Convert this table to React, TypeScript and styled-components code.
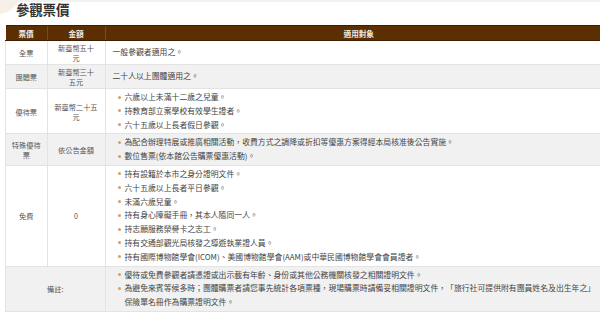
import React from 'react';
import styled, { createGlobalStyle } from 'styled-components';

const GlobalStyle = createGlobalStyle`
  html, body {
    margin: 0;
    padding: 0;
    background: #fff;
    overflow: hidden;
  }
  body {
    font-family: "Noto Sans CJK TC", "Noto Sans", sans-serif;
    color: #444;
  }
`;

const Page = styled.div`
  width: 600px;
  height: 313px;
  overflow: hidden;
  border-top: 2px solid #f1f1f1;
  box-sizing: border-box;
`;

const TitleBar = styled.div`
  position: relative;
  height: 25px;
  padding-left: 16px;

  &::before {
    content: '';
    position: absolute;
    left: -24px;
    top: -30px;
    width: 44px;
    height: 44px;
    border-radius: 50%;
    background: #f8f0e4;
  }
`;

const Title = styled.h2`
  position: relative;
  margin: 0;
  font-size: 13.5px;
  line-height: 18px;
  margin-top: -2px;
  font-weight: 700;
  color: #333;
  letter-spacing: -0.2px;
`;

const Table = styled.table`
  margin-left: 5px;
  width: 607px;
  border-collapse: collapse;
  table-layout: fixed;
`;

const HeadCell = styled.th<{ $w?: number }>`
  width: ${(p) => (p.$w ? `${p.$w}px` : 'auto')};
  background: #5b2f02;
  border-top: 1px solid #3f1f00;
  border-bottom: 1px solid #3f1f00;
  border-left: 1px solid #7a4a1c;
  color: #f4ece4;
  font-size: 7.6px;
  font-weight: 700;
  height: 14px;
  padding: 0;
  text-align: center;
  &:first-child {
    border-left: none;
  }
`;

const Row = styled.tr<{ $alt?: boolean }>`
  background: ${(p) => (p.$alt ? '#f1f1f1' : '#fff')};
  border-bottom: 1px solid #e3e3e3;
`;

const LabelCell = styled.td`
  font-size: 7.2px;
  line-height: 10px;
  color: #555;
  text-align: center;
  vertical-align: middle;
  white-space: pre-line;
  padding: 2px 4px 1px;
  border-left: 1px solid #e3e3e3;
  border-right: 1px solid #e3e3e3;
`;

const DetailCell = styled.td`
  font-size: 7.85px;
  line-height: 13.8px;
  color: #444;
  text-align: left;
  vertical-align: middle;
  padding: 1px 7px 2px;
`;

const Bullets = styled.ul`
  list-style: none;
  margin: 0;
  padding: 0;
`;

const Item = styled.li`
  position: relative;
  padding-left: 12px;

  &::before {
    content: '';
    position: absolute;
    left: 5px;
    top: 5.5px;
    width: 3px;
    height: 3px;
    border-radius: 50%;
    background: #d2a06c;
  }
`;

const NoteItem = styled(Item)`
  white-space: pre-line;
`;

type Ticket = {
  name: string;
  price: string;
  detail: string[];
  list?: boolean;
};

const tickets: Ticket[] = [
  { name: '全票', price: '新臺幣五十\n元', detail: ['一般參觀者適用之。'] },
  { name: '團體票', price: '新臺幣三十\n五元', detail: ['二十人以上團體適用之。'] },
  {
    name: '優待票',
    price: '新臺幣二十五\n元',
    list: true,
    detail: ['六歲以上未滿十二歲之兒童。', '持教育部立案學校有效學生證者。', '六十五歲以上長者假日參觀。'],
  },
  {
    name: '特殊優待\n票',
    price: '依公告金額',
    list: true,
    detail: [
      '為配合辦理特展或推廣相關活動，收費方式之調降或折扣等優惠方案得經本局核准後公告實施。',
      '數位售票(依本館公告購票優惠活動)。',
    ],
  },
  {
    name: '免費',
    price: '0',
    list: true,
    detail: [
      '持有設籍於本市之身分證明文件。',
      '六十五歲以上長者平日參觀。',
      '未滿六歲兒童。',
      '持有身心障礙手冊，其本人隨同一人。',
      '持志願服務榮譽卡之志工。',
      '持有交通部觀光局核發之導遊執業證人員。',
      '持有國際博物館學會(ICOM)、美國博物館學會(AAM)或中華民國博物館學會會員證者。',
    ],
  },
];

const notes = [
  '優待或免費參觀者請憑證或出示載有年齡、身份或其他公務機關核發之相關證明文件。',
  '為避免來賓等候多時；團體購票者請您事先統計各項票種，現場購票時請備妥相關證明文件，「旅行社可提供附有團員姓名及出生年之」\n保險單名冊作為購票證明文件。',
];

function Detail({ t }: { t: Ticket }) {
  if (!t.list) return <>{t.detail[0]}</>;
  return (
    <Bullets>
      {t.detail.map((d) => (
        <Item key={d}>{d}</Item>
      ))}
    </Bullets>
  );
}

export default function App() {
  return (
    <Page>
      <GlobalStyle />
      <TitleBar>
        <Title>參觀票價</Title>
      </TitleBar>
      <Table>
        <thead>
          <tr>
            <HeadCell $w={41}>票價</HeadCell>
            <HeadCell $w={57}>金額</HeadCell>
            <HeadCell>適用對象</HeadCell>
          </tr>
        </thead>
        <tbody>
          {tickets.map((t, i) => (
            <Row key={t.name} $alt={i % 2 === 1}>
              <LabelCell>{t.name}</LabelCell>
              <LabelCell>{t.price}</LabelCell>
              <DetailCell>
                <Detail t={t} />
              </DetailCell>
            </Row>
          ))}
          <Row $alt>
            <LabelCell colSpan={2}>備註:</LabelCell>
            <DetailCell>
              <Bullets>
                {notes.map((n) => (
                  <NoteItem key={n}>{n}</NoteItem>
                ))}
              </Bullets>
            </DetailCell>
          </Row>
        </tbody>
      </Table>
    </Page>
  );
}
